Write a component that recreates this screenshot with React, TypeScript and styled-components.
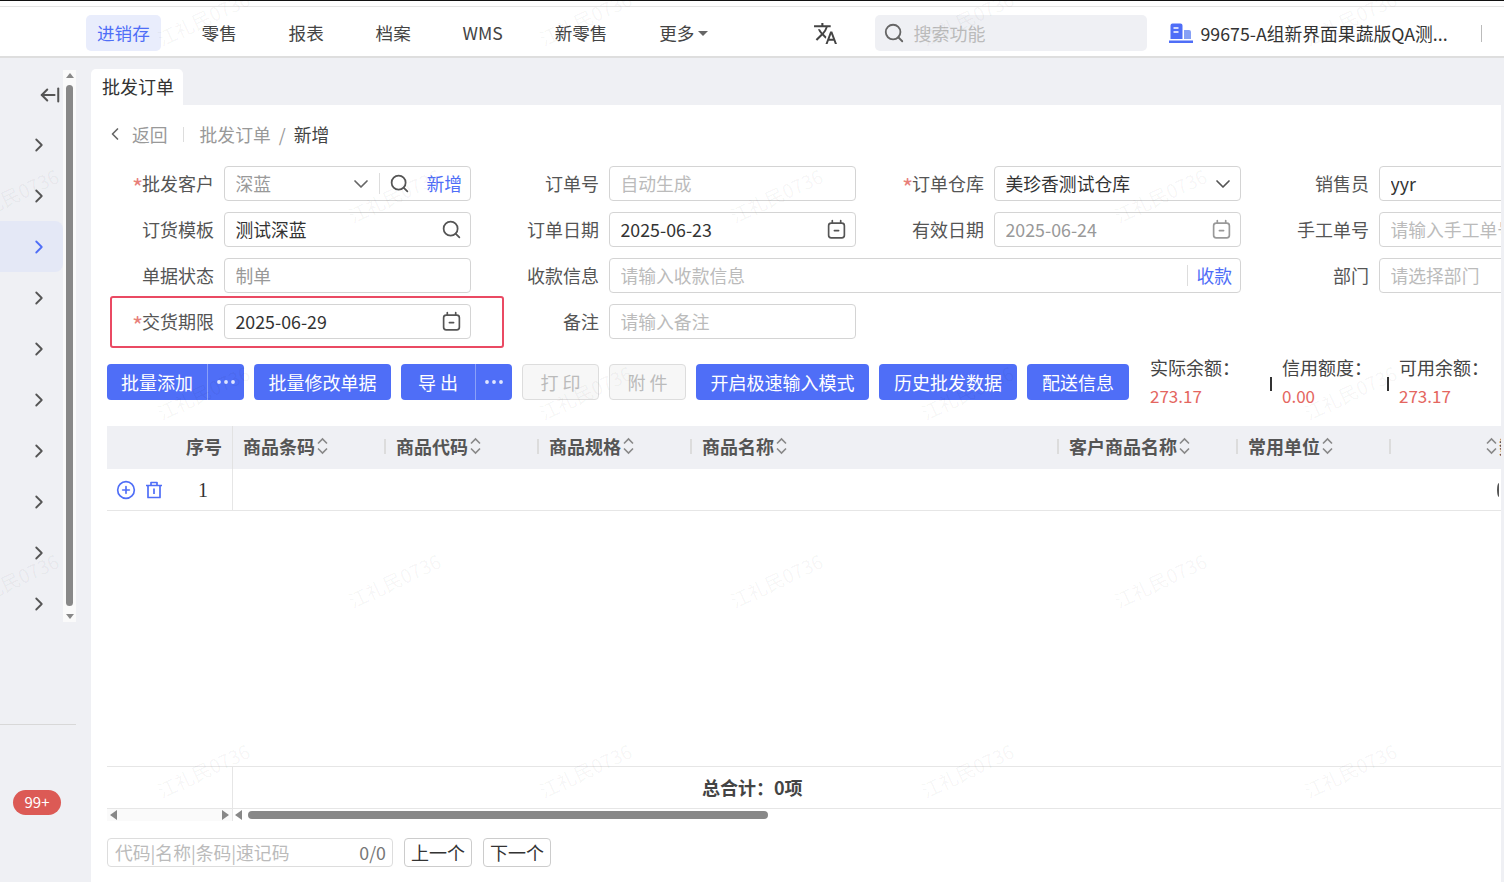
import React from 'react';
import styled, { createGlobalStyle } from 'styled-components';
import { ArrowLeftFromLine, ChevronDown, ChevronLeft, ChevronRight, CirclePlus, Ellipsis, Search } from 'lucide-react';
import { MdTranslate } from 'react-icons/md';

const BLUE = '#4f6ef7';
const PAGE_BG = '#eff0f4';

const GlobalStyle = createGlobalStyle`
    html, body {
        margin: 0;
        padding: 0;
        background: #fff;
    }
    * {
        box-sizing: border-box;
    }
    body {
        font-family: "Noto Sans CJK SC", "Noto Sans", sans-serif;
        font-size: 18px;
        color: #333;
    }
`;

const navItems = ['零售', '报表', '档案', 'WMS', '新零售'];
const sideRows = [0, 1, 2, 3, 4, 5, 6, 7, 8, 9];
const columns = [
    { title: '商品条码', width: 153 },
    { title: '商品代码', width: 153 },
    { title: '商品规格', width: 153 },
    { title: '商品名称', width: 367 },
    { title: '客户商品名称', width: 179 },
    { title: '常用单位', width: 153 },
];

const smallMarks = [
    [12, 195], [394, 195], [776, 195], [1160, 195],
    [203, 392], [585, 392], [967, 392], [1350, 392],
    [12, 580], [394, 580], [776, 580], [1160, 580],
    [203, 770], [585, 770], [967, 770], [1350, 770],
    [203, 18], [585, 18], [967, 18], [1350, 18],
];
const largeMarks = [
    [490, 125], [875, 125], [1255, 125], [110, 125],
    [300, 300], [680, 300], [1065, 300], [1445, 300],
    [490, 490], [875, 490], [1255, 490], [110, 490],
    [205, 650], [870, 640], [1205, 640], [300, 860], [680, 860], [1065, 860],
];

function CalendarIcon({ muted }: { muted?: boolean }) {
    const color = muted ? '#999' : '#555';
    return (
        <svg width="21" height="21" viewBox="0 0 20 20" fill="none" stroke={color} strokeWidth="1.6" strokeLinecap="round">
            <rect x="2.5" y="4" width="15" height="14" rx="2.5" />
            <path d="M6 1.5V4M14 1.5V4M8 11h4" />
        </svg>
    );
}

function SortIcon() {
    return (
        <SortSvg width="11" height="18" viewBox="0 0 11 18" fill="none" stroke="#888" strokeWidth="1.6">
            <path d="M1 6.5 5.5 2 10 6.5M1 11.5 5.5 16 10 11.5" />
        </SortSvg>
    );
}

function TrashIcon() {
    return (
        <svg width="18" height="18" viewBox="0 0 18 18" fill="none" stroke={BLUE} strokeWidth="1.7" strokeLinejoin="round">
            <path d="M1 4.5h16M6 4.5V1.5h6v3M3 4.5V16.5h12V4.5M9 7.5v5.5" />
        </svg>
    );
}

function CompanyIcon() {
    return (
        <svg width="24" height="20" viewBox="0 0 24 20">
            <path d="M1.5 2.5a2 2 0 0 1 2-2h8a2 2 0 0 1 2 2V16h-12z" fill={BLUE} />
            <path d="M15 7h5a2 2 0 0 1 2 2v7h-7z" fill="#86a0f5" />
            <path d="M4.5 5h5M4.5 9h5" stroke="#fff" strokeWidth="1.6" />
            <rect x="0" y="17.5" width="24" height="2.5" fill={BLUE} />
        </svg>
    );
}

function Arrow({ left }: { left?: boolean }) {
    return (
        <svg width="8" height="10" viewBox="0 0 8 10" fill="#888">
            <path d={left ? 'M7 0v10L0 5z' : 'M1 0v10l7-5z'} />
        </svg>
    );
}

export default function App() {
    return (
        <Page>
            <GlobalStyle />
            <TopStrip />
            <Nav>
                <NavList>
                    <NavItem $active>进销存</NavItem>
                    {navItems.map((item) => <NavItem key={item}>{item}</NavItem>)}
                    <NavItem>更多<Caret /></NavItem>
                </NavList>
                <TranslateSlot><MdTranslate size={25} color="#444" /></TranslateSlot>
                <NavSearch>
                    <Search size={22} color="#666" />
                    <span>搜索功能</span>
                </NavSearch>
                <Company>
                    <CompanyIcon />
                    <CompanyName>99675-A组新界面果蔬版QA测...</CompanyName>
                </Company>
                <NavDivider />
            </Nav>
            <Main>
                <Sidebar>
                    <SideTrack>
                        <SideMenu>
                            <CollapseRow><ArrowLeftFromLine size={22} color="#555" strokeWidth={2.2} /></CollapseRow>
                            {sideRows.map((row) => (
                                <SideRow key={row} $active={row === 2}>
                                    <ChevronRight size={22} color={row === 2 ? BLUE : '#555'} />
                                </SideRow>
                            ))}
                        </SideMenu>
                        <SideScroll>
                            <ScrollCap $up />
                            <ScrollThumb />
                            <ScrollCap />
                        </SideScroll>
                    </SideTrack>
                    <SideFooter>
                        <Badge>99+</Badge>
                    </SideFooter>
                </Sidebar>
                <Content>
                    <TabStrip>
                        <Tab>批发订单</Tab>
                    </TabStrip>
                    <Panel>
                        <Breadcrumb>
                            <BackChevron size={20} color="#666" />
                            <BackLink>返回</BackLink>
                            <CrumbDivider />
                            <CrumbMuted>批发订单</CrumbMuted>
                            <CrumbSlash>/</CrumbSlash>
                            <CrumbCurrent>新增</CrumbCurrent>
                        </Breadcrumb>
                        <Form>
                            <Label $required>批发客户</Label>
                            <Field>
                                <Input readOnly value="深蓝" $muted />
                                <Chevron size={24} color="#666" strokeWidth={1.7} />
                                <FieldDivider $left={9} $right={9} />
                                <Search size={21} color="#555" />
                                <FieldLink $left={16}>新增</FieldLink>
                            </Field>
                            <Label>订单号</Label>
                            <Field><Input readOnly placeholder="自动生成" /></Field>
                            <Label $required>订单仓库</Label>
                            <Field>
                                <Input readOnly value="美珍香测试仓库" />
                                <Chevron size={24} color="#555" strokeWidth={1.7} />
                            </Field>
                            <Label>销售员</Label>
                            <Field><Input readOnly value="yyr" /></Field>

                            <Label>订货模板</Label>
                            <Field>
                                <Input readOnly value="测试深蓝" />
                                <Search size={21} color="#555" />
                            </Field>
                            <Label>订单日期</Label>
                            <Field>
                                <Input readOnly value="2025-06-23" />
                                <CalendarIcon />
                            </Field>
                            <Label>有效日期</Label>
                            <Field>
                                <Input readOnly value="2025-06-24" $muted />
                                <CalendarIcon muted />
                            </Field>
                            <Label>手工单号</Label>
                            <Field><Input readOnly placeholder="请输入手工单号" /></Field>

                            <Label>单据状态</Label>
                            <Field><Input readOnly value="制单" $muted /></Field>
                            <Label>收款信息</Label>
                            <WideField>
                                <Input readOnly placeholder="请输入收款信息" />
                                <FieldDivider $left={0} $right={0} />
                                <FieldLink $left={8}>收款</FieldLink>
                            </WideField>
                            <Label>部门</Label>
                            <Field><Input readOnly placeholder="请选择部门" /></Field>

                            <Label $required>交货期限</Label>
                            <Field>
                                <Input readOnly value="2025-06-29" />
                                <CalendarIcon />
                            </Field>
                            <Label>备注</Label>
                            <Field><Input readOnly placeholder="请输入备注" /></Field>
                            <Highlight />
                        </Form>
                        <Actions>
                            <SplitButton $width={137}>
                                <SplitMain>批量添加</SplitMain>
                                <SplitMore><Ellipsis size={24} strokeWidth={1.8} /></SplitMore>
                            </SplitButton>
                            <PrimaryButton $width={137}>批量修改单据</PrimaryButton>
                            <SplitButton $width={111}>
                                <SplitMain>导 出</SplitMain>
                                <SplitMore><Ellipsis size={24} strokeWidth={1.8} /></SplitMore>
                            </SplitButton>
                            <DisabledButton $width={77}>打 印</DisabledButton>
                            <DisabledButton $width={77}>附 件</DisabledButton>
                            <PrimaryButton $width={173}>开启极速输入模式</PrimaryButton>
                            <PrimaryButton $width={138}>历史批发数据</PrimaryButton>
                            <PrimaryButton $width={102}>配送信息</PrimaryButton>
                            <Stats>
                                <Stat $width={120}>
                                    <StatLabel>实际余额：</StatLabel>
                                    <StatValue>273.17</StatValue>
                                </Stat>
                                <StatDivider />
                                <Stat $width={105}>
                                    <StatLabel>信用额度：</StatLabel>
                                    <StatValue>0.00</StatValue>
                                </Stat>
                                <StatDivider />
                                <Stat $width={100}>
                                    <StatLabel>可用余额：</StatLabel>
                                    <StatValue>273.17</StatValue>
                                </Stat>
                            </Stats>
                        </Actions>
                        <Table>
                            <HeadRow>
                                <IndexHead>序号</IndexHead>
                                {columns.map((col) => (
                                    <HeadCell key={col.title} $width={col.width}>
                                        {col.title}<SortIcon />
                                    </HeadCell>
                                ))}
                                <LastHead><SortIcon />数量</LastHead>
                            </HeadRow>
                            <BodyRow>
                                <RowTools>
                                    <CirclePlus size={20} color={BLUE} />
                                    <TrashIcon />
                                    <RowNumber>1</RowNumber>
                                </RowTools>
                                <RowFill>
                                    <ClippedDot />
                                </RowFill>
                            </BodyRow>
                            <TableSpace />
                            <TotalRow>
                                <TotalLeft />
                                <TotalText>总合计：0项</TotalText>
                            </TotalRow>
                            <ScrollRow>
                                <ScrollLeft>
                                    <Arrow left />
                                    <Arrow />
                                </ScrollLeft>
                                <ScrollRight>
                                    <Arrow left />
                                    <HScrollThumb />
                                </ScrollRight>
                            </ScrollRow>
                        </Table>
                        <Finder>
                            <FinderInput>
                                <FinderHint>代码|名称|条码|速记码</FinderHint>
                                <FinderCount>0/0</FinderCount>
                            </FinderInput>
                            <FinderButton>上一个</FinderButton>
                            <FinderButton>下一个</FinderButton>
                        </Finder>
                    </Panel>
                </Content>
                <RightEdge />
            </Main>
            <Watermarks>
                {smallMarks.map(([x, y]) => (
                    <Mark key={`s${x}-${y}`} $x={x} $y={y}>江礼民0736</Mark>
                ))}
                {largeMarks.map(([x, y]) => (
                    <Mark key={`l${x}-${y}`} $x={x} $y={y} $large>江礼民-0736</Mark>
                ))}
            </Watermarks>
        </Page>
    );
}

const Page = styled.div`
    position: relative;
    width: 1504px;
    height: 882px;
    overflow: hidden;
    display: flex;
    flex-direction: column;
    background: ${PAGE_BG};
`;

const TopStrip = styled.div`
    height: 7px;
    background: #fff;
    border-top: 1px solid #111;
    border-bottom: 1px solid #e4e4e4;
`;

const Nav = styled.nav`
    height: 51px;
    display: flex;
    align-items: center;
    padding: 3px 0 0 86px;
    background: #fff;
    border-bottom: 2px solid #dedede;
    font-size: 17.6px;
`;

const NavList = styled.div`
    display: flex;
    align-items: center;
    column-gap: 29.8px;
`;

const NavItem = styled.div<{ $active?: boolean }>`
    height: 36px;
    padding: 0 11px;
    display: flex;
    align-items: center;
    border-radius: 5px;
    line-height: 36px;
    color: ${(p) => (p.$active ? BLUE : '#444')};
    background: ${(p) => (p.$active ? '#e9edfc' : 'transparent')};
`;

const Caret = styled.span`
    width: 0;
    height: 0;
    margin-left: 4px;
    border-left: 5px solid transparent;
    border-right: 5px solid transparent;
    border-top: 5px solid #666;
`;

const TranslateSlot = styled.div`
    display: flex;
    margin-left: 94px;
`;

const NavSearch = styled.div`
    width: 272px;
    height: 36px;
    margin-left: 37px;
    padding-left: 8px;
    display: flex;
    align-items: center;
    column-gap: 8px;
    border-radius: 5px;
    background: ${PAGE_BG};
    color: #bbb;
    font-size: 18px;
`;

const Company = styled.div`
    display: flex;
    align-items: center;
    column-gap: 7px;
    margin-left: 22px;
    width: 300px;
    color: #333;
`;

const CompanyName = styled.span`
    white-space: nowrap;
    font-size: 17.8px;
`;

const NavDivider = styled.div`
    width: 1px;
    height: 17px;
    margin-left: 12px;
    background: #bbb;
`;

const Main = styled.div`
    flex: 1;
    min-height: 0;
    display: flex;
`;

const Sidebar = styled.aside`
    width: 91px;
    flex-shrink: 0;
    padding-top: 12px;
    display: flex;
    flex-direction: column;
`;

const SideTrack = styled.div`
    width: 76px;
    height: 552px;
    display: flex;
`;

const SideMenu = styled.div`
    width: 63px;
    display: flex;
    flex-direction: column;
`;

const CollapseRow = styled.div`
    height: 49px;
    padding: 0 2px 0 0;
    display: flex;
    justify-content: flex-end;
    align-items: center;
    flex-shrink: 0;
`;

const SideRow = styled.div<{ $active?: boolean }>`
    height: 51px;
    flex-shrink: 0;
    padding-left: 28px;
    display: flex;
    align-items: center;
    border-radius: 0 8px 8px 0;
    background: ${(p) => (p.$active ? '#e4e8f6' : 'transparent')};
`;

const SideScroll = styled.div`
    width: 13px;
    padding: 3px 3px;
    display: flex;
    flex-direction: column;
    align-items: center;
    row-gap: 4px;
    background: #fafafa;
`;

const ScrollCap = styled.div<{ $up?: boolean }>`
    width: 0;
    height: 0;
    flex-shrink: 0;
    border-left: 4px solid transparent;
    border-right: 4px solid transparent;
    ${(p) => (p.$up ? 'border-bottom: 5px solid #888;' : 'border-top: 5px solid #888;')}
`;

const ScrollThumb = styled.div`
    flex: 1;
    width: 7px;
    margin: 3px 0 4px;
    border-radius: 4px;
    background: #888;
`;

const SideFooter = styled.div`
    width: 76px;
    margin-top: 102px;
    padding: 65px 0 0 13px;
    border-top: 1px solid #d8d8d8;
`;

const Badge = styled.div`
    width: 48px;
    height: 25px;
    border-radius: 13px;
    background: #dc5a55;
    color: #fff;
    font-size: 15px;
    line-height: 24px;
    text-align: center;
`;

const Content = styled.div`
    flex: 1;
    min-width: 0;
    display: flex;
    flex-direction: column;
    padding-top: 11px;
`;

const TabStrip = styled.div`
    display: flex;
    height: 36px;
    flex-shrink: 0;
`;

const Tab = styled.div`
    width: 92px;
    padding-left: 11px;
    line-height: 34px;
    border-radius: 5px 5px 0 0;
    background: #fff;
    color: #333;
`;

const Panel = styled.div`
    flex: 1;
    min-height: 0;
    padding: 0 0 15px 16px;
    display: flex;
    flex-direction: column;
    background: #fff;
    overflow: hidden;
`;

const Breadcrumb = styled.div`
    height: 61px;
    flex-shrink: 0;
    padding-bottom: 3px;
    display: flex;
    align-items: center;
    font-size: 17.8px;
`;

const BackChevron = styled(ChevronLeft)`
    margin-left: -2px;
`;

const BackLink = styled.span`
    margin-left: 7px;
    color: #999;
`;

const CrumbDivider = styled.span`
    width: 1px;
    height: 15px;
    margin: 0 15.5px;
    background: #ddd;
`;

const CrumbMuted = styled.span`
    color: #999;
`;

const CrumbSlash = styled.span`
    margin: 0 8px;
    color: #999;
`;

const CrumbCurrent = styled.span`
    color: #444;
`;

const Form = styled.div`
    position: relative;
    width: 1520px;
    flex-shrink: 0;
    display: grid;
    grid-template-columns: 117px 247px 138px 247px 138px 247px 138px 247px;
    grid-auto-rows: 35px;
    row-gap: 11px;
`;

const Label = styled.div<{ $required?: boolean }>`
    padding: 0 10px 2px 0;
    display: flex;
    align-items: center;
    justify-content: flex-end;
    color: #555;
    white-space: nowrap;
    &::before {
        content: ${(p) => (p.$required ? '"*"' : 'none')};
        width: 10px;
        font-size: 24px;
        line-height: 1;
        text-align: center;
        color: #e8807a;
        transform: translateY(4px);
    }
`;

const Field = styled.div`
    height: 35px;
    padding: 0 8px 0 10.5px;
    display: flex;
    align-items: center;
    border: 1px solid #d4d4d4;
    border-radius: 4px;
    background: #fff;
    overflow: hidden;
    font-size: 17.8px;
`;

const WideField = styled(Field)`
    grid-column: span 3;
`;

const Input = styled.input<{ $muted?: boolean }>`
    flex: 1;
    min-width: 0;
    height: 100%;
    padding: 0 0 2px;
    border: 0;
    outline: 0;
    background: transparent;
    font: inherit;
    color: ${(p) => (p.$muted ? '#999' : '#333')};
    &::placeholder {
        color: #bbb;
        opacity: 1;
    }
`;

const Chevron = styled(ChevronDown)`
    margin-right: -3px;
    flex-shrink: 0;
`;

const FieldDivider = styled.span<{ $left: number; $right: number }>`
    width: 1px;
    height: 21px;
    margin: 0 ${(p) => p.$right}px 0 ${(p) => p.$left}px;
    flex-shrink: 0;
    background: #ddd;
`;

const FieldLink = styled.span<{ $left: number }>`
    margin-left: ${(p) => p.$left}px;
    padding-bottom: 2px;
    color: ${BLUE};
    white-space: nowrap;
`;

const Highlight = styled.div`
    position: absolute;
    left: 3px;
    top: 130px;
    width: 394px;
    height: 52px;
    border: 2px solid #ea4a63;
    border-radius: 3px;
    pointer-events: none;
`;

const Actions = styled.div`
    height: 36px;
    margin-top: 25px;
    flex-shrink: 0;
    display: flex;
    align-items: flex-start;
    column-gap: 10px;
`;

const PrimaryButton = styled.div<{ $width: number }>`
    width: ${(p) => p.$width}px;
    height: 36px;
    flex-shrink: 0;
    border-radius: 4px;
    background: ${BLUE};
    color: #fff;
    line-height: 36px;
    text-align: center;
    white-space: nowrap;
`;

const SplitButton = styled(PrimaryButton)`
    display: flex;
`;

const SplitMain = styled.span`
    flex: 1;
    text-align: center;
`;

const SplitMore = styled.span`
    width: 37px;
    flex-shrink: 0;
    display: flex;
    align-items: center;
    justify-content: center;
    border-left: 1px solid #8aa0f8;
    color: #dfe5ff;
`;

const DisabledButton = styled.div<{ $width: number }>`
    width: ${(p) => p.$width}px;
    height: 36px;
    flex-shrink: 0;
    border: 1px solid #ddd;
    border-radius: 4px;
    background: #f7f7f7;
    color: #bbb;
    line-height: 34px;
    text-align: center;
`;

const Stats = styled.div`
    height: 36px;
    margin-left: 11px;
    display: flex;
    align-items: flex-start;
`;

const Stat = styled.div<{ $width: number }>`
    width: ${(p) => p.$width}px;
    margin-top: -9px;
    flex-shrink: 0;
    display: flex;
    flex-direction: column;
    row-gap: 5px;
`;

const StatLabel = styled.span`
    line-height: 24px;
    color: #444;
    white-space: nowrap;
`;

const StatValue = styled.span`
    line-height: 24px;
    font-size: 17px;
    color: #e4665f;
`;

const StatDivider = styled.span`
    width: 2px;
    height: 14px;
    margin: 13px 10px 0 0;
    flex-shrink: 0;
    background: #333;
`;

const Table = styled.div`
    margin-top: 26px;
    flex: 1;
    min-height: 0;
    display: flex;
    flex-direction: column;
`;

const HeadRow = styled.div`
    height: 43px;
    flex-shrink: 0;
    display: flex;
    align-items: center;
    background: ${PAGE_BG};
    font-weight: 700;
    color: #555;
    white-space: nowrap;
    overflow: hidden;
`;

const IndexHead = styled.div`
    width: 126px;
    height: 100%;
    padding: 0 10px 3px 0;
    flex-shrink: 0;
    display: flex;
    align-items: center;
    justify-content: flex-end;
    border-right: 1px solid #e2e2e2;
`;

const HeadCell = styled.div<{ $width: number }>`
    position: relative;
    width: ${(p) => p.$width}px;
    padding: 0 0 3px 10px;
    flex-shrink: 0;
    display: flex;
    align-items: center;
    &::after {
        content: '';
        position: absolute;
        right: 0;
        top: 6px;
        height: 15px;
        width: 2px;
        background: #dcdcdc;
    }
`;

const LastHead = styled.div`
    padding: 0 0 3px 93px;
    flex-shrink: 0;
    display: flex;
    align-items: center;
`;

const SortSvg = styled.svg`
    margin: 0 2px;
    flex-shrink: 0;
`;

const BodyRow = styled.div`
    height: 42px;
    flex-shrink: 0;
    display: flex;
    border-bottom: 1px solid #e6e6e6;
`;

const RowTools = styled.div`
    width: 126px;
    flex-shrink: 0;
    padding-left: 9px;
    display: flex;
    align-items: center;
    column-gap: 9px;
    border-right: 1px solid #e6e6e6;
`;

const RowNumber = styled.span`
    margin-left: 26px;
    padding-top: 2px;
    font-family: "Liberation Serif", serif;
    font-size: 20px;
`;

const RowFill = styled.div`
    flex: 1;
    min-width: 0;
    display: flex;
    align-items: center;
    justify-content: flex-end;
`;

const ClippedDot = styled.span`
    width: 4px;
    height: 14px;
    border-left: 2px solid #555;
    border-radius: 50%;
`;

const TableSpace = styled.div`
    flex: 1;
    min-height: 0;
`;

const TotalRow = styled.div`
    height: 43px;
    flex-shrink: 0;
    display: flex;
    border-top: 1px solid #e6e6e6;
    border-bottom: 1px solid #e6e6e6;
`;

const TotalLeft = styled.div`
    width: 126px;
    flex-shrink: 0;
    border-right: 1px solid #e6e6e6;
`;

const TotalText = styled.div`
    padding-left: 469px;
    line-height: 41px;
    font-weight: 700;
    color: #444;
`;

const ScrollRow = styled.div`
    height: 13px;
    flex-shrink: 0;
    display: flex;
    padding-bottom: 1px;
`;

const ScrollLeft = styled.div`
    width: 126px;
    padding: 0 3px;
    flex-shrink: 0;
    display: flex;
    align-items: center;
    justify-content: space-between;
    border-right: 1px solid #e6e6e6;
    background: #fafafa;
`;

const ScrollRight = styled.div`
    flex: 1;
    padding-left: 2px;
    display: flex;
    align-items: center;
    column-gap: 5px;
`;

const HScrollThumb = styled.div`
    width: 520px;
    height: 8px;
    border-radius: 4px;
    background: #888;
`;

const Finder = styled.div`
    margin-top: 16px;
    flex-shrink: 0;
    display: flex;
    column-gap: 11px;
`;

const FinderInput = styled.div`
    width: 286px;
    height: 29px;
    padding: 0 6px 1px 7px;
    display: flex;
    align-items: center;
    justify-content: space-between;
    border: 1px solid #ddd;
    border-radius: 4px;
    font-size: 17.8px;
`;

const FinderHint = styled.span`
    color: #bbb;
`;

const FinderCount = styled.span`
    color: #777;
`;

const FinderButton = styled.div`
    width: 68px;
    height: 29px;
    border: 1px solid #ccc;
    border-radius: 4px;
    line-height: 26px;
    text-align: center;
    color: #333;
`;

const RightEdge = styled.div`
    width: 3px;
    flex-shrink: 0;
    background: ${PAGE_BG};
`;

const Watermarks = styled.div`
    position: absolute;
    inset: 0;
    pointer-events: none;
    overflow: hidden;
`;

const Mark = styled.span<{ $x: number; $y: number; $large?: boolean }>`
    position: absolute;
    left: ${(p) => p.$x}px;
    top: ${(p) => p.$y}px;
    transform: translate(-50%, -50%) rotate(-25deg);
    font-size: ${(p) => (p.$large ? 34 : 19)}px;
    color: rgba(0, 0, 0, ${(p) => (p.$large ? 0.018 : 0.045)});
    white-space: nowrap;
`;
